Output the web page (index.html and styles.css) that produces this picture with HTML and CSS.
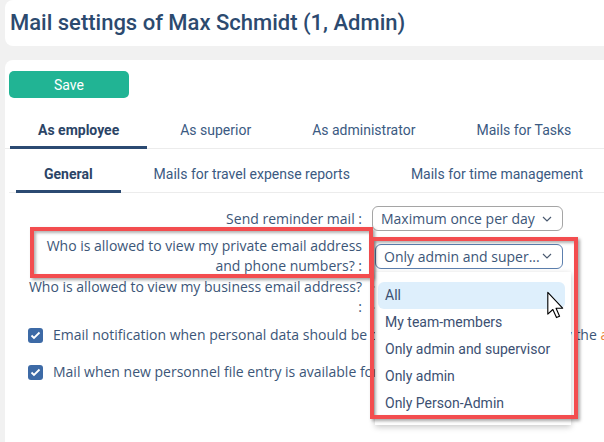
FILE: index.html
```html
<!DOCTYPE html>
<html lang="en">
<head>
    <meta charset="UTF-8">
    <title>Mail settings</title>
    <link rel="stylesheet" href="styles.css">
</head>
<body>

<header class="page-header">
    <h1>Mail settings of Max Schmidt (1, Admin)</h1>
</header>

<main class="card">
    <button class="btn-save">Save</button>

    <nav class="tabs tabs-main">
        <a class="tab active">As employee</a>
        <a class="tab">As superior</a>
        <a class="tab">As administrator</a>
        <a class="tab">Mails for Tasks</a>
    </nav>

    <nav class="tabs tabs-sub">
        <a class="tab active">General</a>
        <a class="tab">Mails for travel expense reports</a>
        <a class="tab">Mails for time management</a>
    </nav>

    <div class="form">
        <div class="row row-first">
            <label>Send reminder mail :</label>
            <div class="select">Maximum once per day <svg width="10" height="6" viewBox="0 0 10 6"><polyline points="1,1 5,5 9,1" fill="none" stroke="#4a5a70" stroke-width="1.2"/></svg></div>
        </div>
        <div class="row row-private">
            <label>Who is allowed to view my private email address<br>and phone numbers? :</label>
            <div class="select select-open">Only admin and super... <svg width="10" height="6" viewBox="0 0 10 6"><polyline points="1,1 5,5 9,1" fill="none" stroke="#4a5a70" stroke-width="1.2"/></svg></div>
        </div>
        <div class="row row-business">
            <label>Who is allowed to view my business email address?<br>:</label>
            <div class="select">Only admin <svg width="10" height="6" viewBox="0 0 10 6"><polyline points="1,1 5,5 9,1" fill="none" stroke="#4a5a70" stroke-width="1.2"/></svg></div>
        </div>

        <div class="check-row check-first">
            <span class="checkbox"><svg width="11" height="9" viewBox="0 0 11 9"><polyline points="1.5,4.5 4,7 9.5,1.5" fill="none" stroke="#fff" stroke-width="1.8"/></svg></span>
            <span>Email notification when personal data should be changed and need approval by the <span class="link">administrator</span></span>
        </div>
        <div class="check-row">
            <span class="checkbox"><svg width="11" height="9" viewBox="0 0 11 9"><polyline points="1.5,4.5 4,7 9.5,1.5" fill="none" stroke="#fff" stroke-width="1.8"/></svg></span>
            <span>Mail when new personnel file entry is available for me</span>
        </div>
    </div>
</main>

<!-- geöffnete Auswahlliste -->
<ul class="dropdown">
    <li class="hover">All</li>
    <li>My team-members</li>
    <li>Only admin and supervisor</li>
    <li>Only admin</li>
    <li>Only Person-Admin</li>
</ul>

<!-- Markierungen -->
<div class="mark mark-label"></div>
<div class="mark mark-select"></div>

<svg class="cursor" width="19" height="28" viewBox="0 0 13 20">
    <path d="M1,1 L1,16.5 L4.6,13.2 L7.2,19 L9.4,18 L6.9,12.3 L11.6,12.3 Z" fill="#fff" stroke="#000" stroke-width="0.8" stroke-linejoin="round"/>
</svg>

</body>
</html>
```

FILE: styles.css
```css
body {
    margin: 0;
    padding: 0;
    background-color: #f1f1f1;
    font-family: Roboto, "Liberation Sans", sans-serif;
    color: #3c5678;
    position: relative;
    width: 604px;
    height: 442px;
    overflow: hidden;
}

.page-header {
    margin-left: 5px;
    height: 46px;
    background-color: #fff;
    border-radius: 8px 0 0 8px;
}

.page-header h1 {
    margin: 0;
    padding-left: 5px;
    font-size: 22px;
    font-weight: 500;
    line-height: 46px;
    color: #2c4a6f;
}

.card {
    margin: 14px 0 0 5px;
    height: 400px;
    background-color: #fff;
    border-radius: 8px 0 0 0;
    padding: 11px 0 0 4px;
    box-sizing: border-box;
}

.btn-save {
    display: block;
    width: 120px;
    height: 27px;
    border: none;
    border-radius: 5px;
    background-color: #21b494;
    color: #fff;
    font-family: Roboto, sans-serif;
    font-size: 14px;
    padding: 0;
}

.tabs {
    display: flex;
    gap: 5px;
    border-bottom: 1px solid #ececec;
    white-space: nowrap;
}

.tab {
    padding: 8px 28px 6px;
    line-height: 20px;
    font-size: 14px;
    color: #3b5a82;
    border-bottom: 3px solid transparent;
    margin-bottom: -1px;
}

.tab.active {
    font-weight: 700;
    color: #2b4466;
    border-bottom-color: #2b4a72;
}

.tabs-main {
    margin-top: 14px;
    margin-left: -4px;
    padding-left: 5px;
}

.tabs-sub {
    margin-top: 6px;
    padding-left: 7px;
}

.tabs-sub .tab {
    padding-top: 9px;
}

.form {
    margin: 13px 0 0 0;
    font-family: "Open Sans", sans-serif;
    font-size: 14px;
}

.row {
    display: grid;
    grid-template-columns: 353px auto;
    column-gap: 10px;
    align-items: center;
}

.row label {
    text-align: right;
    line-height: 20px;
    white-space: nowrap;
}

.row-private {
    margin-top: 5px;
}

.row-business {
    margin-top: 1px;
}

.select {
    width: 179px;
    height: 23px;
    border: 1px solid #a5a5a5;
    border-radius: 6px;
    display: flex;
    align-items: center;
    justify-content: space-between;
    padding: 0 10px 0 0;
    text-indent: 8px;
    white-space: nowrap;
}

.select svg {
    flex-shrink: 0;
}

.select-open {
    margin-left: 3px;
    width: 176px;
    border-color: #5c7fae;
}

.check-row {
    display: flex;
    align-items: center;
    gap: 10px;
    margin-left: 19px;
    line-height: 20px;
    white-space: nowrap;
}

.check-first {
    margin-top: 8px;
}

.check-row + .check-row {
    margin-top: 17px;
}

.checkbox {
    width: 15px;
    height: 15px;
    border-radius: 3px;
    background-color: #3d6aa6;
    display: flex;
    align-items: center;
    justify-content: center;
    flex-shrink: 0;
}

.link {
    color: #e8833a;
}

.dropdown {
    position: absolute;
    left: 375px;
    top: 272px;
    width: 196px;
    margin: 0;
    padding: 10px 6px 8px 3px;
    box-sizing: border-box;
    list-style: none;
    background-color: #fff;
    box-shadow: 0 2px 6px rgba(0, 0, 0, 0.22);
    font-size: 14px;
    color: #3c5072;
}

.dropdown li {
    height: 27px;
    line-height: 27px;
    padding-left: 7px;
    border-radius: 6px;
}

.dropdown li.hover {
    background-color: #deeffc;
}

.mark {
    position: absolute;
    border: 4px solid #f34d4f;
    box-shadow: 2px 2px 3px rgba(0, 0, 0, 0.35), inset 2px 2px 3px rgba(0, 0, 0, 0.3);
}

.mark-label {
    left: 30px;
    top: 227px;
    width: 335px;
    height: 43px;
}

.mark-select {
    left: 370px;
    top: 237px;
    width: 200px;
    height: 174px;
}

.cursor {
    position: absolute;
    left: 546px;
    top: 291px;
}
```
